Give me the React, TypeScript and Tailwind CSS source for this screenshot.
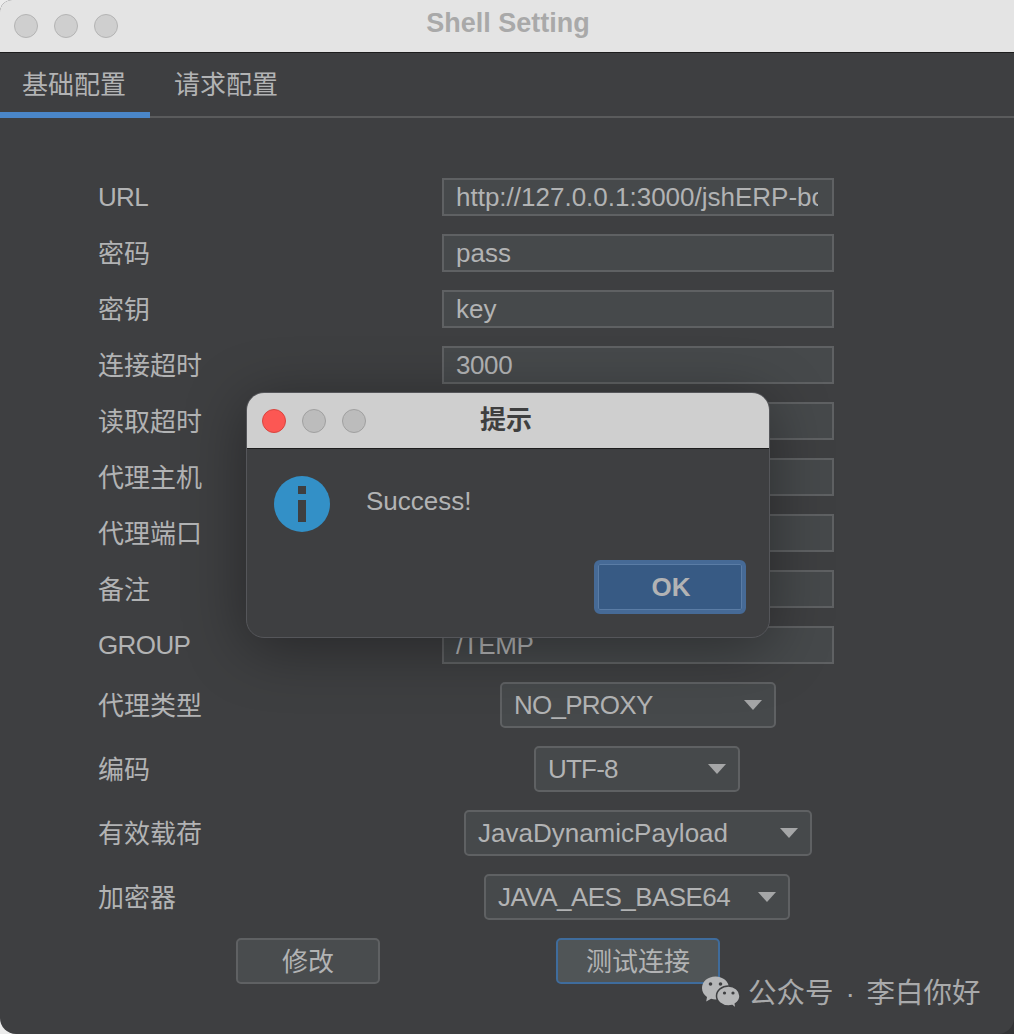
const cjk = "font-['Liberation_Sans','Noto_Sans_CJK_SC',sans-serif]"

const fields = [
  { label: "URL", value: "http://127.0.0.1:3000/jshERP-boot/", labelClass: "tracking-[-0.7px]", valueClass: "overflow-x-clip" },
  { label: "密码", value: "pass", labelClass: "pt-[2px]", valueClass: "" },
  { label: "密钥", value: "key", labelClass: "pt-[2px]", valueClass: "" },
  { label: "连接超时", value: "3000", labelClass: "pt-[2px]", valueClass: "tracking-[-0.4px]" },
  // the next four values sit behind the dialog
  { label: "读取超时", value: "", labelClass: "pt-[2px]", valueClass: "" },
  { label: "代理主机", value: "", labelClass: "pt-[2px]", valueClass: "" },
  { label: "代理端口", value: "", labelClass: "pt-[2px]", valueClass: "" },
  { label: "备注", value: "", labelClass: "pt-[2px]", valueClass: "" },
  { label: "GROUP", value: "/TEMP", labelClass: "tracking-[-0.6px]", valueClass: "tracking-[-0.4px]" },
]

function Dot({ className }: { className: string }) {
  return <span className={`block size-6 rounded-full border ${className}`} />
}

function Select({
  label,
  value,
  width,
  ml,
  tracking = "",
}: {
  label: string
  value: string
  width: string
  ml: string
  tracking?: string
}) {
  return (
    <div className="flex h-[46px] items-center pl-[98px]">
      <span className="w-[130px] shrink-0 pt-[2px]">{label}</span>
      <div className={`flex h-[46px] items-center justify-between rounded-[5px] border-2 border-[#5f6163] bg-[#46494b] pl-3 pr-[12px] ${width} ${ml}`}>
        <span className={tracking}>{value}</span>
        <span className="h-0 w-0 border-x-[9px] border-t-[10px] border-x-transparent border-t-[#a5a6a7]" />
      </div>
    </div>
  )
}

export default function App() {
  return (
    <div className="h-[1034px] w-[1014px] bg-[linear-gradient(to_right,#ececec_50%,#333436_50%)]">
      <div className={`relative h-[1034px] w-[1014px] overflow-hidden rounded-b-2xl rounded-tl-xl bg-[#3e3f41] text-[26px] leading-none text-[#b2b3b4] ${cjk}`}>
        {/* Title bar */}
        <div className="relative flex h-[53px] items-center gap-[16px] border-b border-[#1d1d1d] bg-[#e4e4e4] pl-[14px]">
          <Dot className="border-[#b4b4b4] bg-[#cfcfcf]" />
          <Dot className="border-[#b4b4b4] bg-[#cfcfcf]" />
          <Dot className="border-[#b4b4b4] bg-[#cfcfcf]" />
          <span className="absolute left-[2px] right-0 top-[10px] text-center text-[27px] font-bold text-[#a9a9a9]">Shell Setting</span>
        </div>

        {/* Tabs */}
        <div className="flex h-[65px] border-b-2 border-[#5a5b5c] pt-[19px]">
          <div className="-mb-[2px] h-[46px] w-[150px] border-b-[6px] border-[#4a86c8] pl-[22px]">基础配置</div>
          <div className="pl-[24px]">请求配置</div>
        </div>

        {/* Form */}
        <div className="flex flex-col pt-[60px]">
          <div className="flex flex-col gap-[18px]">
            {fields.map((f) => (
              <div key={f.label} className="flex h-[38px] items-center pl-[98px]">
                <span className={`w-[344px] shrink-0 ${f.labelClass}`}>{f.label}</span>
                <div className="flex h-[38px] w-[392px] items-center border-2 border-[#5f6163] bg-[#46494b] pl-3 pr-[14px]">
                  <span className={`block w-full whitespace-nowrap ${f.valueClass}`}>{f.value}</span>
                </div>
              </div>
            ))}
          </div>
          <div className="mt-[18px] flex flex-col gap-[18px]">
            <Select label="代理类型" value="NO_PROXY" width="w-[276px]" ml="ml-[272px]" tracking="tracking-[-0.75px]" />
            <Select label="编码" value="UTF-8" width="w-[206px]" ml="ml-[306px]" tracking="tracking-[-0.8px]" />
            <Select label="有效载荷" value="JavaDynamicPayload" width="w-[348px]" ml="ml-[236px]" />
            <Select label="加密器" value="JAVA_AES_BASE64" width="w-[306px]" ml="ml-[256px]" tracking="tracking-[-0.55px]" />
          </div>
          <div className="mt-[18px] flex pl-[236px]">
            <button className="h-[46px] w-[144px] rounded-[5px] border-2 border-[#5f6163] bg-[#494c4e] pt-[2px]">修改</button>
            <button className="ml-[176px] h-[46px] w-[164px] rounded-[5px] border-2 border-[#3f6c9c] bg-[#505557] pt-[2px]">测试连接</button>
          </div>
        </div>

        {/* Watermark */}
        <div className="absolute left-[701px] top-[976px] flex h-[32px] items-center text-[28.5px] text-[#a9aaab]">
          <svg width="41" height="33" viewBox="0 0 41 33">
            <path
              d="M14.5 0.5C6.8 0.5 1 5.6 1 12c0 3.8 2.1 6.9 5 9l-.8 4.6 4.9-2.8c1.4.4 2.9.6 4.4.6 7.4 0 13.5-5 13.5-11.4S21.9.5 14.5.5z"
              fill="#b6b7b8"
            />
            <path
              d="M27.5 10C20.8 10 15.5 14.5 15.5 20s5.300 10 12 10c1.300 0 2.500-.2 3.700-.5l3.800 3-.7-4.600c2.900-1.800 4.700-4.600 4.700-7.900 0-5.500-5.300-10-11.500-10z"
              fill="#b6b7b8"
              stroke="#3e3f41"
              strokeWidth="1.5"
            />
            <circle cx="9.5" cy="8" r="1.8" fill="#3e3f41" />
            <circle cx="19.5" cy="8" r="1.8" fill="#3e3f41" />
            <circle cx="23.5" cy="17" r="1.6" fill="#3e3f41" />
            <circle cx="32" cy="17" r="1.6" fill="#3e3f41" />
          </svg>
          <span className="ml-[6px] whitespace-nowrap pt-[2px]">公众号</span>
          <span className="ml-[12px] w-[21px] pt-[2px]">·</span>
          <span className="whitespace-nowrap pt-[2px]">李白你好</span>
        </div>

        {/* Dialog */}
        <div className="absolute left-[246px] top-[392px] h-[246px] w-[524px] overflow-hidden rounded-[18px] border border-[#55565a] bg-[#3e3f41] shadow-[0_10px_60px_rgba(0,0,0,0.38)]">
          <div className="relative flex h-[56px] items-center gap-[16px] border-b border-[#1d1d1d] bg-[#cfcfcf] pl-[15px]">
            <Dot className="border-[#d9453f] bg-[#fc5753]" />
            <Dot className="border-[#a0a0a0] bg-[#bcbcbc]" />
            <Dot className="border-[#a0a0a0] bg-[#bcbcbc]" />
            <span className="absolute inset-x-0 right-[4px] top-[14px] text-center text-[26px] font-bold text-[#3f3f3f]">提示</span>
          </div>
          <div className="flex pl-[27px] pt-[27px]">
            <svg width="56" height="56" viewBox="0 0 56 56">
              <circle cx="28" cy="28" r="28" fill="#3390c7" />
              <rect x="24" y="10" width="8" height="8" fill="#3e3f41" />
              <rect x="24" y="24" width="8" height="22" fill="#3e3f41" />
            </svg>
            <span className="ml-[36px] mt-[12px]">Success!</span>
          </div>
          <div className="mt-[28px] flex justify-end pr-[23px]">
            <button className="h-[54px] w-[152px] rounded-md border-4 border-[#466a96] bg-[#375a84] pl-[2px] font-bold shadow-[inset_0_0_0_1px_#5a7ca5]">OK</button>
          </div>
        </div>
      </div>
    </div>
  )
}
